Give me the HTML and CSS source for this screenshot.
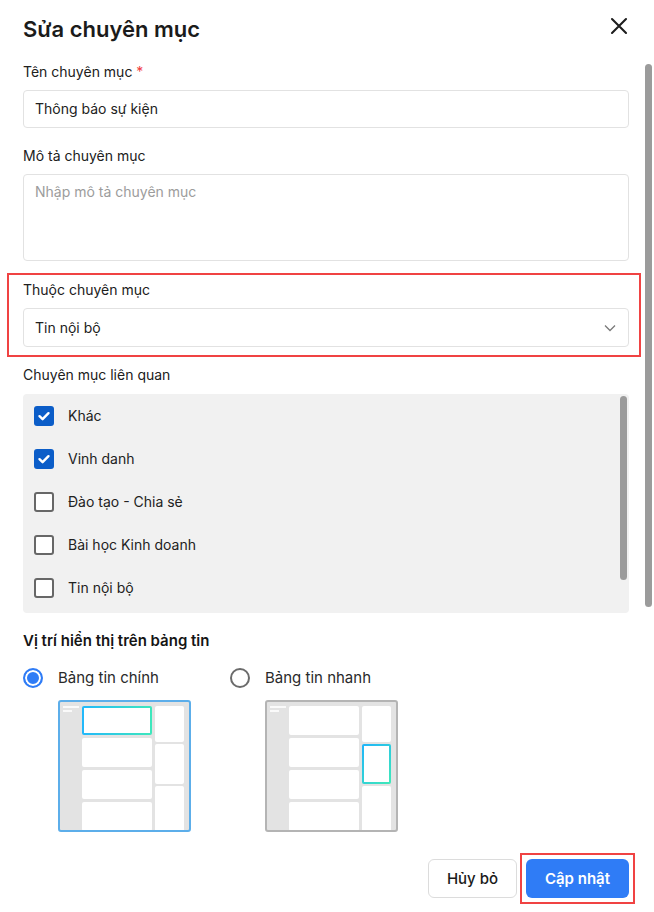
FILE: index.html
```html
<!DOCTYPE html>
<html lang="vi">
<head>
    <meta charset="UTF-8">
    <meta name="viewport" content="width=device-width, initial-scale=1.0">
    <title>Sửa chuyên mục</title>
    <link rel="stylesheet" href="styles.css">
</head>
<body>
    <div class="modal">
        <!-- tiêu đề -->
        <div class="modal-header">
            <h1 class="modal-title">Sửa chuyên mục</h1>
            <button class="close-btn" aria-label="Đóng">
                <svg width="18" height="18" viewBox="0 0 18 18"><path d="M2 2L16 16M16 2L2 16" stroke="#1d1d1d" stroke-width="2.1" stroke-linecap="round"/></svg>
            </button>
        </div>

        <div class="modal-body">
            <div class="form">
                <!-- tên -->
                <div class="field field-first">
                    <label class="label">Tên chuyên mục <span class="required">*</span></label>
                    <div class="input">Thông báo sự kiện</div>
                </div>

                <!-- mô tả -->
                <div class="field">
                    <label class="label">Mô tả chuyên mục</label>
                    <div class="input textarea placeholder">Nhập mô tả chuyên mục</div>
                </div>

                <!-- chuyên mục cha -->
                <div class="field highlight">
                    <label class="label">Thuộc chuyên mục</label>
                    <div class="input select">
                        <span>Tin nội bộ</span>
                        <svg width="12" height="8" viewBox="0 0 12 8"><path d="M1 1.5L6 6.5L11 1.5" fill="none" stroke="#7a7a7a" stroke-width="1.3"/></svg>
                    </div>
                </div>

                <!-- liên quan -->
                <div class="field field-related">
                    <label class="label">Chuyên mục liên quan</label>
                    <div class="related">
                        <div class="related-list">
                            <div class="check-row">
                                <span class="checkbox checked"><svg width="20" height="20" viewBox="0 0 20 20"><path d="M5.5 10.2L8.6 13.2L14.5 7.2" fill="none" stroke="#fff" stroke-width="2.4" stroke-linecap="round" stroke-linejoin="round"/></svg></span>
                                <span>Khác</span>
                            </div>
                            <div class="check-row">
                                <span class="checkbox checked"><svg width="20" height="20" viewBox="0 0 20 20"><path d="M5.5 10.2L8.6 13.2L14.5 7.2" fill="none" stroke="#fff" stroke-width="2.4" stroke-linecap="round" stroke-linejoin="round"/></svg></span>
                                <span>Vinh danh</span>
                            </div>
                            <div class="check-row">
                                <span class="checkbox"></span>
                                <span>Đào tạo - Chia sẻ</span>
                            </div>
                            <div class="check-row">
                                <span class="checkbox"></span>
                                <span>Bài học Kinh doanh</span>
                            </div>
                            <div class="check-row">
                                <span class="checkbox"></span>
                                <span>Tin nội bộ</span>
                            </div>
                        </div>
                        <div class="related-scroll"></div>
                    </div>
                </div>

                <!-- vị trí hiển thị -->
                <div class="section-title">Vị trí hiển thị trên bảng tin</div>
                <div class="positions">
                    <div class="position">
                        <div class="radio-row">
                            <span class="radio checked"></span>
                            <span>Bảng tin chính</span>
                        </div>
                        <div class="preview active">
                            <div class="pv-side"><i class="pv-line"></i><i class="pv-line short"></i></div>
                            <div class="pv-main">
                                <div class="pv-card glow"></div>
                                <div class="pv-card"></div>
                                <div class="pv-card"></div>
                                <div class="pv-card"></div>
                            </div>
                            <div class="pv-right">
                                <div class="pv-card r1"></div>
                                <div class="pv-card r2"></div>
                                <div class="pv-card r3"></div>
                            </div>
                        </div>
                    </div>
                    <div class="position">
                        <div class="radio-row">
                            <span class="radio"></span>
                            <span>Bảng tin nhanh</span>
                        </div>
                        <div class="preview">
                            <div class="pv-side"><i class="pv-line"></i><i class="pv-line short"></i></div>
                            <div class="pv-main">
                                <div class="pv-card"></div>
                                <div class="pv-card"></div>
                                <div class="pv-card"></div>
                                <div class="pv-card"></div>
                            </div>
                            <div class="pv-right">
                                <div class="pv-card r1"></div>
                                <div class="pv-card r2 glow-v"></div>
                                <div class="pv-card r3"></div>
                            </div>
                        </div>
                    </div>
                </div>

                <!-- nút -->
                <div class="modal-footer">
                    <button class="btn btn-cancel">Hủy bỏ</button>
                    <div class="btn-mark">
                        <button class="btn btn-primary">Cập nhật</button>
                    </div>
                </div>
            </div>
            <div class="scrollbar"><div class="scroll-thumb"></div></div>
        </div>
    </div>
</body>
</html>
```

FILE: styles.css
```css
/* trang */
body {
    margin: 0;
    font-family: Inter, "Noto Sans", sans-serif;
    color: #1f1f1f;
    background: #fff;
    width: 654px;
}

/* tiêu đề */
.modal-header {
    display: flex;
    justify-content: space-between;
    align-items: center;
    padding: 15px 23px 0 23px;
    height: 28px;
}

.modal-title {
    margin: 0;
    font-size: 22px;
    line-height: 28px;
    font-weight: 600;
    color: #1b1b1b;
}

.close-btn {
    border: none;
    background: none;
    padding: 0;
    width: 24px;
    height: 24px;
    display: flex;
    align-items: center;
    justify-content: center;
    margin-top: -6px;
}

/* thân */
.modal-body {
    display: flex;
}

.form {
    width: 606px;
    margin-left: 23px;
}

.scrollbar {
    width: 7px;
    margin-left: 16px;
    padding-top: 21px;
}

.scroll-thumb {
    height: 543px;
    background: #9b9b9b;
    border-radius: 4px;
}

/* ô nhập */
.field {
    margin-top: 18px;
}

.field-first {
    margin-top: 19px;
}

.label {
    display: block;
    font-size: 14px;
    line-height: 20px;
    margin-bottom: 8px;
    color: #202020;
}

.required {
    color: #f03c3c;
}

.input {
    box-sizing: border-box;
    height: 38px;
    border: 1px solid #e2e2e2;
    border-radius: 4px;
    padding: 0 11px;
    font-size: 14px;
    line-height: 36px;
    color: #222;
}

.textarea {
    height: 87px;
    line-height: 20px;
    padding-top: 7px;
}

.placeholder {
    color: #9c9c9c;
}

.select {
    height: 39px;
    line-height: 37px;
    display: flex;
    justify-content: space-between;
    align-items: center;
    padding-right: 12px;
}

/* khung đỏ đánh dấu */
.highlight {
    margin: 12px -12px 0 -16px;
    padding: 5px 10px 8px 14px;
    border: 2px solid #f04343;
}

.field-related {
    margin-top: 8px;
}

.field-related .label {
    margin-bottom: 9px;
}

/* danh sách chuyên mục liên quan */
.related {
    display: flex;
    height: 219px;
    background: #f1f1f1;
    border-radius: 4px;
    overflow: hidden;
}

.related-list {
    flex: 1;
    padding-left: 11px;
}

.related-scroll {
    width: 7px;
    margin: 2px 2px 33px 0;
    background: #9b9b9b;
    border-radius: 4px;
}

.check-row {
    height: 43px;
    display: flex;
    align-items: center;
    gap: 14px;
    font-size: 14px;
    color: #222;
}

.checkbox {
    box-sizing: border-box;
    width: 20px;
    height: 20px;
    border: 2px solid #676767;
    border-radius: 3px;
    background: #fff;
    display: flex;
}

.checkbox.checked {
    border: none;
    background: #0b5dc8;
}

/* vị trí hiển thị */
.section-title {
    margin-top: 18px;
    font-size: 15px;
    line-height: 20px;
    font-weight: 600;
    color: #151515;
}

.positions {
    display: flex;
    gap: 39px;
    margin-top: 17px;
}

.radio-row {
    display: flex;
    align-items: center;
    gap: 15px;
    font-size: 15px;
    line-height: 20px;
    color: #2a2a2a;
}

.radio {
    box-sizing: border-box;
    width: 20px;
    height: 20px;
    border-radius: 50%;
    border: 2px solid #6b6b6b;
    background: #fff;
}

.radio.checked {
    border-color: #2f7cf6;
    background: #2f7cf6;
    box-shadow: inset 0 0 0 2px #fff;
}

/* ảnh minh hoạ bố cục */
.preview {
    box-sizing: border-box;
    width: 133px;
    height: 132px;
    margin: 12px 0 0 35px;
    border: 2px solid #b4b4b4;
    border-radius: 3px;
    background: #e3e3e3;
    display: flex;
    padding: 4px 5px 0 0;
    overflow: hidden;
}

.preview.active {
    border-color: #5caeea;
}

.pv-side {
    width: 19px;
    padding-left: 3px;
    display: flex;
    flex-direction: column;
    gap: 2px;
}

.pv-line {
    display: block;
    width: 16px;
    height: 2px;
    background: #fafafa;
}

.pv-line.short {
    width: 9px;
}

.pv-main {
    width: 70px;
    margin-right: 3px;
    display: flex;
    flex-direction: column;
    gap: 3px;
}

.pv-right {
    width: 29px;
    display: flex;
    flex-direction: column;
    gap: 2px;
}

.pv-card {
    box-sizing: border-box;
    flex: 0 0 29px;
    background: #fff;
    border-radius: 2px;
}

.pv-right .r1 {
    flex-basis: 36px;
}

.pv-right .r2 {
    flex-basis: 40px;
}

.pv-right .r3 {
    flex-basis: 50px;
}

.pv-card.glow {
    border: 2px solid transparent;
    background: linear-gradient(#fff, #fff) padding-box, linear-gradient(90deg, #22b8fb, #3ee8bc) border-box;
}

.pv-card.glow-v {
    border: 2px solid transparent;
    background: linear-gradient(#fff, #fff) padding-box, linear-gradient(135deg, #1fb4fb, #40eab8) border-box;
}

/* nút */
.modal-footer {
    display: flex;
    justify-content: flex-end;
    align-items: center;
    gap: 3px;
    margin: 21px -6px 9px 0;
}

.btn {
    height: 39px;
    border-radius: 6px;
    font-family: Inter, "Noto Sans", sans-serif;
    font-size: 15px;
    cursor: pointer;
}

.btn-cancel {
    width: 89px;
    background: #fff;
    border: 1px solid #dcdcdc;
    color: #1a1a1a;
    font-weight: 500;
}

.btn-mark {
    border: 2px solid #f04343;
    padding: 4px;
    display: flex;
}

.btn-primary {
    width: 103px;
    background: #2f7cf6;
    border: none;
    color: #fff;
    font-weight: 600;
}
```
